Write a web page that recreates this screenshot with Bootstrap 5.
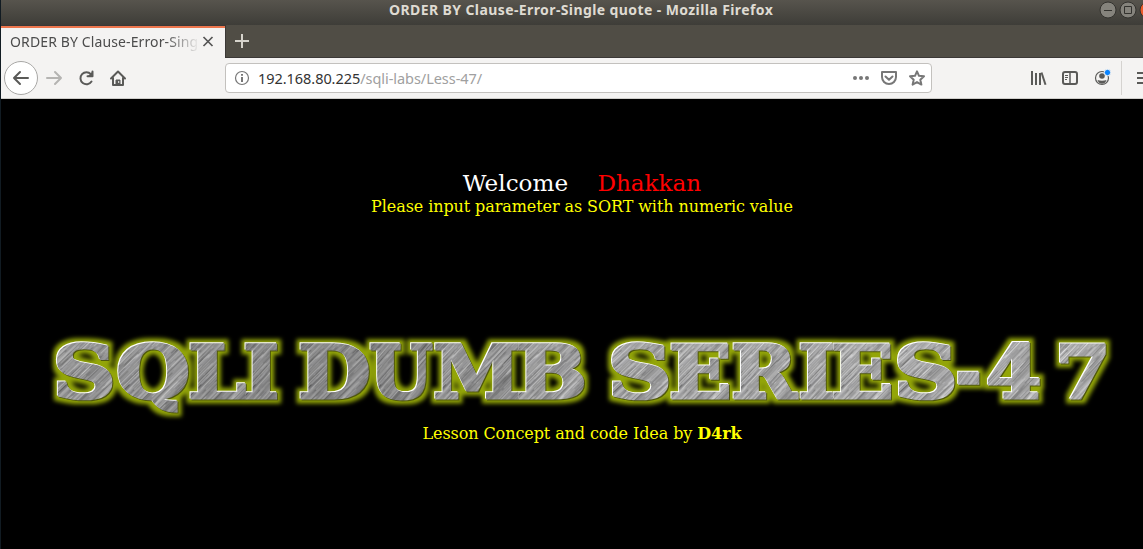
<!DOCTYPE html>
<html lang="en">
<head>
<meta charset="utf-8">
<title>ORDER BY Clause-Error-Single quote</title>
<link href="https://cdn.jsdelivr.net/npm/bootstrap@5.3.0/dist/css/bootstrap.min.css" rel="stylesheet">
<style>
body{background:#000;width:1143px;height:549px;font-family:"Noto Sans","Open Sans",sans-serif;border-left:1px solid #111b22}
.titlebar{height:25px;background:linear-gradient(#57544d,#3e3d38);color:#dfdbd2;padding-left:388px;padding-right:0}
.titletext{font-size:14px;font-weight:700;line-height:20px;height:25px;white-space:nowrap;letter-spacing:.4px}
.tabs{height:33px;background:#504d45;border-bottom:1px solid #3b3836}
.page-tab{width:224px;height:32px;background:#f4f3f2;border-top:2px solid #ed764d;color:#4c4c4c;font-size:14px;padding-left:9px;margin-top:1px}
.page-tab-wrap{height:33px;width:225px;border-right:1px solid #3b3836;background:#3b3836;box-shadow:0 1px #f4f3f2}
.tabname{width:188px;white-space:nowrap;letter-spacing:.12px;line-height:20px;padding-bottom:3px;-webkit-mask-image:linear-gradient(90deg,#000 155px,transparent 190px)}
.tools{height:41px;background:#f4f3f2;border-bottom:1px solid #cfcecb;color:#5a5a58}
.backbtn{width:34px;height:34px;border:1px solid #a9a8a6;background:#fff;margin-left:3px}
.urlbox{width:707px;height:30px;border:1px solid #c3c1be;background:#fff;border-radius:4px;color:#a0a0a0;font-size:14.5px;margin-left:90px}
.urlbox span{letter-spacing:-.05px;padding-top:2px}
.urlbox b{font-weight:400;color:#333}
.viewport{height:450px;background:#000}
.sheet{width:1162px;font-family:"DejaVu Serif",serif;font-size:16px;color:#ff0}
.hello{font-size:23.1px;line-height:28px;white-space:pre;padding-top:70px}
.prompt,.credit{line-height:19px;letter-spacing:-.085px}
.logo{display:block}
.logo text{font-family:"DejaVu Serif",serif;font-weight:700;font-size:76px}
svg{display:block;flex:none}
</style>
</head>
<body class="overflow-hidden">
<header>
  <div class="titlebar d-flex overflow-hidden">
    <div class="titletext">ORDER BY Clause-Error-Single quote - Mozilla Firefox</div>
    <svg class="ms-auto" width="44" height="25" viewBox="1099 0 44 25"><g stroke="#33322e"><circle cx="1108" cy="10" r="8" fill="#85837c"/><circle cx="1128" cy="10" r="8" fill="#85837c"/><circle cx="1148" cy="10" r="8" fill="#ed5a29"/><path d="M1104 10.500h8M1124.500 6.500h7v7h-7z" fill="none"/></g></svg>
  </div>
  <div class="tabs d-flex">
    <div class="page-tab-wrap"><div class="page-tab d-flex align-items-center">
      <div class="tabname overflow-hidden">ORDER BY Clause-Error-Sing</div>
      <svg width="12" height="16" viewBox="0 0 12 16" fill="none" stroke="#555" stroke-width="1.700" class="ms-1"><path d="M1.500 2l9 9M10.500 2l-9 9"/></svg>
    </div></div>
    <svg width="32" height="32" viewBox="226 25 32 32" stroke="#d6d3cb" stroke-width="2"><path d="M235 41h14M242 34v14"/></svg>
  </div>
  <div class="tools d-flex align-items-center">
    <div class="backbtn rounded-circle d-flex align-items-center justify-content-center"><svg width="18" height="16" viewBox="0 0 18 16" fill="none" stroke="#5a5a58" stroke-width="2" stroke-linecap="round" stroke-linejoin="round"><path d="M16 8H2M8 2L2 8l6 6"/></svg></div>
    <svg width="97" height="30" viewBox="38 63 97 30" fill="none" stroke="#5a5a58" stroke-width="2" stroke-linecap="round" stroke-linejoin="round">
      <path stroke="#b5b4b2" d="M47 78h14M55 72l6 6-6 6"/>
      <path d="M91.500 81.500a6 6 0 1 1-.6-7.300M92.500 71.500v4.800h-5"/><path d="M93 71v6h-6z" fill="#5a5a58" stroke="none"/>
      <path d="M111 78.500l7-7 7 7M113 78v7h10v-7"/><path d="M116 85v-5h4v5z" fill="#5a5a58" stroke-width="1"/><path d="M118.700 81.500v1" stroke="#fff" stroke-width="1"/>
    </svg>
    <div class="urlbox d-flex align-items-center">
      <svg width="32" height="28" viewBox="226 64 32 28" fill="none" stroke="#777"><circle cx="242" cy="78" r="6.500" stroke-width="1.200"/><path d="M242 77v5M242 74v1.700" stroke-width="2"/></svg>
      <span><b>192.168.80.225</b>/sqli-labs/Less-47/</span>
      <svg class="ms-auto" width="83" height="28" viewBox="847 64 83 28" fill="none" stroke="#777" stroke-width="2" stroke-linejoin="round" stroke-linecap="round"><g fill="#777" stroke="none"><circle cx="854" cy="78" r="2"/><circle cx="860" cy="78" r="2"/><circle cx="866" cy="78" r="2"/></g><path d="M881 72h14v5a7 7 0 0 1-14 0zM884.500 76.500l3.500 3.300 3.500-3.300"/><path d="M916 71.300l2 4.500 5 .5-3.700 3.400 1.100 4.900-4.400-2.500-4.400 2.500 1.100-4.900L909 76.300l5-.5z"/></svg>
    </div>
    <svg class="ms-auto" width="211" height="40" viewBox="932 58 211 40" fill="none" stroke="#5a5a58" stroke-width="2">
      <path d="M1032 71v14M1036 73v12M1040 73v12"/><path d="M1041.500 72.500l4 12.200"/>
      <rect x="1063" y="72" width="14" height="12" rx="2"/><path d="M1070 72v12" stroke-width="1.500"/><path d="M1065 75.500h3M1065 77.500h3M1065 79.500h2" stroke-width="1"/>
      <circle cx="1102" cy="78" r="6.500" stroke-width="1.200"/><circle cx="1102" cy="76" r="2.800" fill="#5a5a58" stroke="none"/><path d="M1097.500 80q2 .8 4.500.8t4.500-.8q-1 3.700-4.500 3.700t-4.500-3.700" fill="#5a5a58" stroke="none"/><circle cx="1107.500" cy="72.500" r="3.200" fill="#0a84ff" stroke="#f4f3f2" stroke-width="1"/>
      <path d="M1121.500 61v34" stroke="#d5d3d0" stroke-width="1"/><path d="M1137 73h8M1137 78h8M1137 83h8"/>
    </svg>
  </div>
</header>
<main class="viewport overflow-hidden">
  <div class="sheet text-center">
    <div class="hello"><span class="text-white">Welcome</span>&nbsp;&nbsp;&nbsp; <span style="color:red">Dhakkan</span></div>
    <div class="prompt">Please input parameter as SORT with numeric value</div>
    <svg class="logo" id="logo" width="1162" height="208" viewBox="1 216 1162 208">
      <defs>
        <pattern id="steel" width="173" height="97" patternUnits="userSpaceOnUse" patternTransform="rotate(-49)"></pattern>
        <filter id="bevel" filterUnits="userSpaceOnUse" x="30" y="310" width="1110" height="114" color-interpolation-filters="sRGB">
          <feMorphology in="SourceAlpha" operator="dilate" radius="4" result="fat"/>
          <feGaussianBlur in="fat" stdDeviation="2.200" result="soft"/>
          <feFlood flood-color="#93a508"/><feComposite in2="soft" operator="in" result="glow"/>
          <feOffset in="SourceAlpha" dx="-1" dy="-1" result="a"/><feFlood flood-color="#fff"/><feComposite in2="a" operator="in" result="light"/>
          <feOffset in="SourceAlpha" dx="1" dy="1" result="b"/><feFlood flood-color="#50580c"/><feComposite in2="b" operator="in" result="dark"/>
          <feMerge><feMergeNode in="glow"/><feMergeNode in="dark"/><feMergeNode in="light"/><feMergeNode in="SourceGraphic"/></feMerge>
        </filter>
      </defs>
      <g id="letters" filter="url(#bevel)"></g>
    </svg>
    <div class="credit">Lesson Concept and code Idea by <b>D4rk</b></div>
  </div>
</main>
<script src="https://cdn.jsdelivr.net/npm/bootstrap@5.3.0/dist/js/bootstrap.bundle.min.js"></script>
<script>
const NS='http://www.w3.org/2000/svg';
const make=(n,a,p)=>{const e=document.createElementNS(NS,n);for(const k in a)e.setAttribute(k,a[k]);p.append(e);return e};
// brushed steel: fine parallel scratches of varying grey
const steel=document.getElementById('steel');
make('rect',{width:173,height:97,fill:'#8f8f91'},steel);
let seed=7;const rnd=()=>(seed=(seed*16807)%2147483647)/2147483647;
for(let i=0;i<900;i++){
  const g=Math.round(70+rnd()*150),x=rnd()*173,y=rnd()*96,w=15+rnd()*50;
  for(const dx of [0,-173])make('rect',{x:x+dx,y,width:w,height:.9,fill:`rgb(${g},${g},${g})`,opacity:.5},steel);
}
// each letter: character, left edge, right edge, brightness
const cells=[['S',57,113,.98],['Q',118,188,.98],['L',190,246,.93],['I',245,278,.9],['D',300,369,.9],['U',370,433,.9],['M',435,519,.98],['B',518,585,1.03],['S',612,669,1.06],['E',671,730,1.08],['R',733,799,1.08],['I',800,834,1.08],['E',833,892,1.1],['S',898,955,1.1],['-',958,980,1.1],['4',988,1040,1.1],['7',1060,1106,1.12]];
const c=document.createElement('canvas').getContext('2d');
c.font='700 76px "DejaVu Serif"';
const group=document.getElementById('letters'),SW=3;
for(const [ch,l,r,b] of cells){
  const m=c.measureText(ch),s=(r-l-SW)/(m.actualBoundingBoxRight+m.actualBoundingBoxLeft);
  const t=make('text',{transform:`matrix(${s},0,0,.955,${l+SW/2+m.actualBoundingBoxLeft*s},398.400)`,fill:'url(#steel)',stroke:'url(#steel)','stroke-width':SW,'vector-effect':'non-scaling-stroke',style:`filter:brightness(${b})`},group);
  t.textContent=ch;
}
</script>
</body>
</html>
